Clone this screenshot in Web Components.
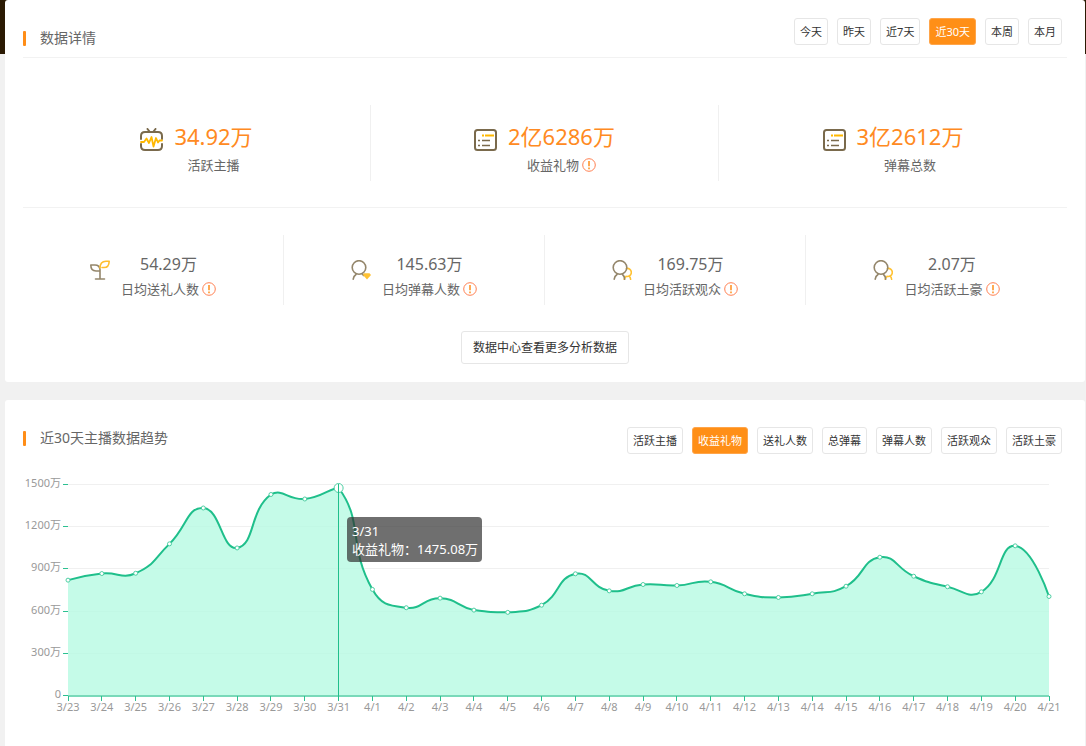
<!DOCTYPE html>
<html lang="zh-CN">
<head>
<meta charset="utf-8">
<title>数据详情</title>
<style>
  html { background: #f1f1f1; }
  body { margin: 0; font-family: "Noto Sans", "Noto Sans CJK SC", sans-serif; color: #666; }
</style>
</head>
<body>
<data-page>
  <data-card>
    <card-header heading="数据详情" ruled>
      <tab-group slot="actions" label="时间范围" items="今天,昨天,近7天,近30天,本周,本月" active="3"></tab-group>
    </card-header>
    <stat-row size="large">
      <stat-item size="large" icon="tv" value="34.92万">活跃主播</stat-item>
      <stat-item size="large" icon="list" value="2亿6286万" info>收益礼物</stat-item>
      <stat-item size="large" icon="list" value="3亿2612万">弹幕总数</stat-item>
    </stat-row>
    <stat-row>
      <stat-item icon="sprout" value="54.29万" info>日均送礼人数</stat-item>
      <stat-item icon="fan" value="145.63万" info>日均弹幕人数</stat-item>
      <stat-item icon="people" value="169.75万" info>日均活跃观众</stat-item>
      <stat-item icon="people" value="2.07万" info>日均活跃土豪</stat-item>
    </stat-row>
    <more-button>数据中心查看更多分析数据</more-button>
  </data-card>
  <data-card grow>
    <card-header heading="近30天主播数据趋势" low>
      <tab-group slot="actions" label="数据指标" items="活跃主播,收益礼物,送礼人数,总弹幕,弹幕人数,活跃观众,活跃土豪" active="1"></tab-group>
    </card-header>
    <trend-chart></trend-chart>
  </data-card>
</data-page>

<script>
const define = (name, css, html, setup) => {
  customElements.define(name, class extends HTMLElement {
    connectedCallback() {
      if (this.shadowRoot) return;
      const root = this.attachShadow({ mode: 'open' });
      root.innerHTML = `<style>*{box-sizing:border-box}${css}</style>${typeof html === 'function' ? html(this) : html}`;
      if (setup) setup(this, root);
    }
  });
};

define('data-page', `
  :host { display: flex; flex-direction: column; gap: 18px; box-sizing: border-box; min-height: 100vh;
    padding: 0 1px 0 5px; background: linear-gradient(#2b1a03, #2b1a03) top / 100% 54px no-repeat #f1f1f1; }
`, '<slot></slot>');

define('data-card', `
  :host { display: block; box-sizing: border-box; padding: 0 18px 18px; background: #fff; border-radius: 3px; }
  :host([grow]) { flex: 1; border-radius: 3px 3px 0 0; }
`, '<slot></slot>');

define('card-header', `
  :host { display: flex; justify-content: space-between; align-items: flex-start; box-sizing: border-box; height: 58px; }
  :host([ruled]) { border-bottom: 1px solid #f2f2f2; }
  h2 { display: flex; align-items: center; gap: 14px; margin: 28px 0 0; font-size: 14px; line-height: 20px; font-weight: 400; color: #666; }
  h2::before { content: ""; width: 3px; height: 15px; border-radius: 1px; background: #ff8d17; }
  .actions { padding: 18px 5px 0 0; }
  :host([low]) .actions { padding-top: 27px; }
`, el => `<h2>${el.getAttribute('heading')}</h2><div class="actions"><slot name="actions"></slot></div>`);

define('tab-group', `
  :host { display: block; }
  div { display: flex; gap: 9px; }
  button { height: 27px; padding: 0 5px; border: 1px solid #e6e6e6; border-radius: 3px; background: #fff;
    font: inherit; font-size: 11px; line-height: 25px; color: #333; white-space: nowrap; cursor: pointer; }
  button[aria-pressed=true] { background: #ff8f17; border-color: #ffa54a; color: #fff; }
`, el => `<div role="group" aria-label="${el.getAttribute('label')}">` +
  el.getAttribute('items').split(',').map((t, i) =>
    `<button type="button" aria-pressed="${i === +el.getAttribute('active')}">${t}</button>`).join('') + '</div>',
(el, root) => root.addEventListener('click', e => {
  const hit = e.target.closest('button');
  if (hit) root.querySelectorAll('button').forEach(b => b.setAttribute('aria-pressed', b === hit));
}));

define('stat-row', `
  :host { display: grid; grid-auto-flow: column; grid-auto-columns: minmax(0, 1fr); padding: 27px 0 26px; }
  :host([size=large]) { padding-top: 47px; border-bottom: 1px solid #f2f2f2; }
  ::slotted(:not(:last-child)) { border-right: 1px solid #f0f0f0; }
`, '<slot></slot>');

const icons = {
  tv: `<svg width="23" height="24" viewBox="0 0 23 24" fill="none" stroke-linecap="round" stroke-linejoin="round">
    <path d="M7.5 1l2 2.5M15.5 1l-2 2.5M1 11V8q0-4 4-4h13q4 0 4 4v3M1 16v2q0 4 4 4h13q4 0 4-4v-2" stroke="#7a6a4c" stroke-width="2"/>
    <path d="M1 14h3l2.500-3.500 2.500 4.500 2.500-6 2 9.500 2.500-8.500 2 4.500 1.500-2H22" stroke="#ffb800" stroke-width="1.800"/></svg>`,
  list: `<svg width="23" height="24" viewBox="0 0 23 24" fill="none">
    <rect x="1" y="2" width="21" height="20" rx="2.500" stroke="#7a6a4c" stroke-width="2"/>
    <path d="M8 7.500h2M11 7.500h9" stroke="#ffb800" stroke-width="2"/>
    <path d="M4 12.500h2M8 12.500h8M4 17.500h2M8 17.500h8" stroke="#7a6a4c" stroke-width="1.600"/></svg>`,
  sprout: `<svg width="20" height="20" viewBox="0 0 20 20" fill="none" stroke-width="1.600" stroke-linecap="round" stroke-linejoin="round">
    <path d="M10 19V9.500Q9.500 5 5 5H.8Q.8 11 6 11h3.500M5.500 19h9" stroke="#94866b"/>
    <path d="M10 8q0-6.800 6-6.800h3.200Q19 7.500 14 7.500H12" stroke="#ffbe2e"/></svg>`,
  fan: `<svg width="20" height="20" viewBox="0 0 20 20" fill="none" stroke="#94866b" stroke-width="1.600" stroke-linecap="round">
    <circle cx="8" cy="7.500" r="6.800"/><path d="M5 14.500Q2.600 16 2.200 19.200M11.500 14l1 1.500"/>
    <path d="M13 13.200h5.500l1.500 1.800-4 4.500-4-4.500z" fill="#ffc233" stroke="none"/></svg>`,
  people: `<svg width="20" height="20" viewBox="0 0 20 20" fill="none" stroke="#94866b" stroke-width="1.600" stroke-linecap="round">
    <path d="M14.500 8.500a4 4 0 1 1-.5 7.700M14 16.500q-1.500 1-1.800 2.800M17 16.200q1.500 1 1.600 3.100" stroke="#ffc233"/>
    <circle cx="8" cy="7.500" r="6.800"/><path d="M5 14.500Q2.600 16 2.200 19.200M10.500 14.500q2 1.500 2.200 4.700"/></svg>`,
  info: `<svg width="14" height="14" viewBox="0 0 14 14" fill="none" stroke="#ff8052">
    <circle cx="7" cy="7" r="6.300"/><path d="M7 3v5.200M7 9.500v1.700" stroke="#ff8d1a" stroke-width="1.500"/></svg>`
};

define('stat-item', `
  :host { display: flex; justify-content: center; align-items: flex-start; gap: 11px; box-sizing: border-box; padding: 16px 0 4px; }
  :host([size=large]) { padding-top: 14px; }
  svg { display: block; flex: none; }
  .icon { padding-top: 9px; }
  .text { display: flex; flex-direction: column; align-items: center; white-space: nowrap; }
  .value { font-size: 16px; line-height: 26px; }
  :host([size=large]) .value { font-size: 22px; line-height: 34px; color: #ff8a22; }
  .label { display: flex; align-items: center; gap: 3px; font-size: 13px; line-height: 24px; }
`, el => `<span class="icon" aria-hidden="true">${icons[el.getAttribute('icon')]}</span>
  <div class="text"><div class="value">${el.getAttribute('value')}</div>
  <div class="label"><slot></slot>${el.hasAttribute('info') ? icons.info : ''}</div></div>`);

define('more-button', `
  :host { display: flex; justify-content: center; }
  button { height: 33px; padding: 0 11px; border: 1px solid #e6e6e6; border-radius: 3px; background: #fff;
    font: inherit; font-size: 12px; line-height: 31px; color: #333; cursor: pointer; }
`, '<button type="button"><slot></slot></button>');

const series = [
  ['3/23', 820], ['3/24', 867], ['3/25', 869], ['3/26', 1078], ['3/27', 1333], ['3/28', 1049],
  ['3/29', 1429], ['3/30', 1397], ['3/31', 1475.08], ['4/1', 754], ['4/2', 624], ['4/3', 692],
  ['4/4', 607], ['4/5', 591], ['4/6', 642], ['4/7', 865], ['4/8', 744], ['4/9', 789],
  ['4/10', 782], ['4/11', 808], ['4/12', 723], ['4/13', 697], ['4/14', 723], ['4/15', 777],
  ['4/16', 983], ['4/17', 848], ['4/18', 773], ['4/19', 737], ['4/20', 1064], ['4/21', 704]
];
const selected = 8;

// Smooth bezier through the points; control points stay inside the data's bounds.
function smoothPath(pts) {
  const ys = pts.map(p => p[1]);
  const lo = Math.min(...ys), hi = Math.max(...ys);
  const clamp = y => Math.max(lo, Math.min(hi, y));
  let c0 = pts[0];
  let d = `M${pts[0]}`;
  for (let i = 1; i < pts.length; i++) {
    const p = pts[i], a = pts[i - 1], b = pts[i + 1];
    let c1 = p, next = p;
    if (b) {
      const before = Math.hypot(p[0] - a[0], p[1] - a[1]);
      const after = Math.hypot(b[0] - p[0], b[1] - p[1]);
      const r = after / (before + after);
      const vx = b[0] - a[0], vy = b[1] - a[1];
      c1 = [p[0] - vx * 0.5 * (1 - r), clamp(p[1] - vy * 0.5 * (1 - r))];
      next = [p[0] + vx * 0.5 * r, clamp(p[1] + vy * 0.5 * r)];
    }
    d += `C${c0} ${c1} ${p}`;
    c0 = next;
  }
  return d;
}

define('trend-chart', `
  :host { display: block; position: relative; }
  svg { display: block; width: 100%; height: 270px; overflow: visible; }
  text { font-size: 11px; fill: #999; }
  .tip { position: absolute; top: 59px; padding: 5px 4px 4px 5px; border-radius: 4px; background: rgba(50, 50, 50, .7);
    font-size: 13px; line-height: 18px; color: #fff; white-space: nowrap; }
`, '<svg role="img" aria-label="收益礼物"></svg><div class="tip"><div>3/31</div><div>收益礼物：1475.08万</div></div>',
(el, root) => {
  const svg = root.querySelector('svg'), tip = root.querySelector('.tip');
  const draw = () => {
    const left = 45, right = el.clientWidth - 18, top = 26, base = 237;
    const x = i => left + (right - left) * i / (series.length - 1);
    const y = v => base + 0.5 - (base - top) * v / 1500;
    const pts = series.map((s, i) => [x(i), y(s[1])]);
    const line = smoothPath(pts);
    let out = '';
    for (let v = 0; v <= 1500; v += 300) {
      const gy = Math.floor(y(v)) + 0.5;
      if (v) out += `<path d="M${left} ${gy}H${right}" stroke="#f0f0f0"/>`;
      out += `<path d="M${left - 5} ${gy}h5" stroke="#2cc091"/>`;
      out += `<text x="${left - 7}" y="${gy + 2}" text-anchor="end">${v ? v + '万' : '0'}</text>`;
    }
    out += `<path d="${line}L${right} ${base}L${left} ${base}Z" fill="#b7fae2" fill-opacity=".8"/>`;
    out += `<path d="M${left} ${base + 1}H${right}" stroke="#1fbf8b" stroke-width="2" stroke-opacity=".6"/>`;
    out += `<path d="${line}" fill="none" stroke="#1fbf8b" stroke-width="2"/>`;
    series.forEach((s, i) => {
      const tx = Math.floor(x(i)) + 0.5;
      out += `<path d="M${tx} ${base + 1}v5" stroke="#2cc091"/>`;
      out += `<text x="${x(i)}" y="${base + 16}" text-anchor="middle">${s[0]}</text>`;
      out += `<circle cx="${x(i)}" cy="${pts[i][1]}" r="${i === selected ? 4.5 : 2}" fill="#fff" stroke="#4dcfa3"/>`;
    });
    out += `<path d="M${Math.floor(x(selected)) + 0.5} ${top}V${base + 5}" stroke="#1fbf8b"/>`;
    svg.innerHTML = out;
    tip.style.left = Math.round(x(selected) + 8) + 'px';
  };
  draw();
  new ResizeObserver(draw).observe(el);
});
</script>
</body>
</html>
